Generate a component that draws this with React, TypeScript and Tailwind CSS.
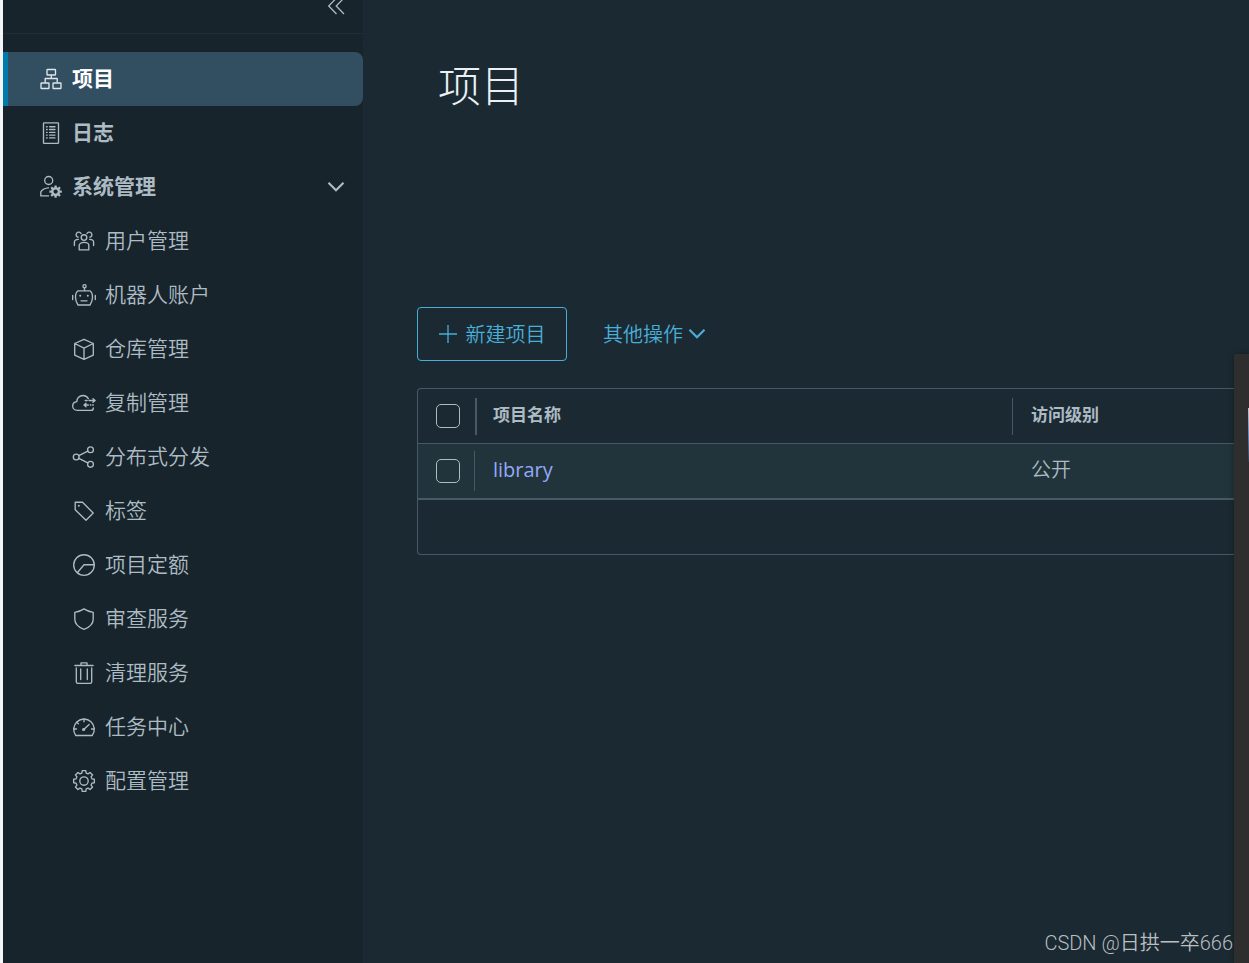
import type { ReactNode } from 'react';

function gearPath(cx: number, cy: number, outer: number, inner: number) {
  const points: string[] = [];
  for (let i = 0; i < 8; i++) {
    const a = (i * Math.PI) / 4;
    const steps: [number, number][] = [
      [-0.27, inner],
      [-0.17, outer],
      [0.17, outer],
      [0.27, inner],
    ];
    for (const [d, r] of steps) {
      points.push(`${(cx + r * Math.sin(a + d)).toFixed(2)} ${(cy - r * Math.cos(a + d)).toFixed(2)}`);
    }
  }
  return `M${points.join('L')}Z`;
}

function Icon({ children }: { children: ReactNode }) {
  return (
    <svg
      viewBox="0 0 24 24"
      className="size-6 shrink-0"
      fill="none"
      stroke="currentColor"
      strokeWidth="1.35"
      strokeLinejoin="round"
      strokeLinecap="round"
      aria-hidden="true"
    >
      {children}
    </svg>
  );
}

const icons = {
  projects: (
    <Icon>
      <rect x="8" y="2.5" width="8.500" height="5.500" rx="0.600" />
      <rect x="2" y="16" width="8" height="5.500" rx="0.600" />
      <rect x="14" y="16" width="8" height="5.500" rx="0.600" />
      <path d="M12.300 8.500v3M6.200 15v-3.500h12V15" />
    </Icon>
  ),
  logs: (
    <Icon>
      <rect x="4.500" y="1.900" width="15" height="20.500" rx="0.600" />
      <path d="M7.500 5.700h.7M7.500 8.500h.7M7.500 11.300h.7M7.500 14.100h.7M7.500 16.900h.7M10.600 5.700h5.400M10.600 8.500h5.400M10.600 11.300h5.400M10.600 14.100h5.400M10.600 16.900h5.400" />
    </Icon>
  ),
  admin: (
    <Icon>
      <circle cx="9.700" cy="5.500" r="4" />
      <path d="M9.500 20.900H1.800v-4c1.500-2.300 4.200-3.800 7.700-4" />
      <path d={gearPath(16.6, 16.6, 6.3, 4.5)} fill="currentColor" stroke="none" />
      <circle cx="16.600" cy="16.600" r="2.100" className="fill-[#17242b]" stroke="none" />
    </Icon>
  ),
  users: (
    <Icon>
      <circle cx="12" cy="8.500" r="2.800" />
      <path d="M7.200 20.900v-4.600c0-1.700 2.200-2.900 4.800-2.900s4.800 1.200 4.800 2.900v4.600z" />
      <path d="M6 8.200a2.600 2.600 0 1 1 3-3.700M18 8.200a2.600 2.600 0 1 0-3-3.700" />
      <path d="M2.400 16.500v-3.200c0-1.700 1.400-2.800 4-2.900M21.600 16.500v-3.200c0-1.700-1.400-2.800-4-2.900" />
    </Icon>
  ),
  robot: (
    <Icon>
      <circle cx="12.500" cy="3.200" r="1.600" />
      <path d="M12.500 4.800v3M6 7.800h12c1.500 1 2.500 3 2.500 6.500s-1 5.500-2.500 7.700H6c-1.500-2.200-2.500-4.200-2.500-7.700S4.500 8.800 6 7.800z" />
      <path d="M.7 12.500v4M23.300 12.500v4M9 17.800h6" />
      <circle cx="8.200" cy="12.700" r="1" fill="currentColor" stroke="none" />
      <circle cx="15.800" cy="12.700" r="1" fill="currentColor" stroke="none" />
    </Icon>
  ),
  registry: (
    <Icon>
      <path d="M12 2.300l9.300 4.200v11.700L12 22.300l-9.300-4.100V6.500zM2.700 6.500l9.300 4.700 9.300-4.700M12 11.200v11" />
    </Icon>
  ),
  replication: (
    <Icon>
      <path d="M16.400 7.700C15.200 5.500 13.300 4.500 11 4.500c-3.600 0-6.200 2.800-6.200 6.200C2.400 11 .7 12.700.7 15c0 2.500 1.900 4.400 4.400 4.400h14c1.300 0 2.200-1 2.200-2.500" />
      <path d="M13.200 9.500h2M17 9.500h6M21 7.700l2.100 1.800-2.100 1.800M20.700 14h.6M18.300 14h.6M16.300 14H12M14 12.200L12 14l2 1.800" />
    </Icon>
  ),
  distribution: (
    <Icon>
      <circle cx="4.200" cy="12" r="2.900" />
      <circle cx="18.500" cy="4.700" r="2.900" />
      <circle cx="18.500" cy="19.300" r="2.900" />
      <path d="M6.800 10.700l9-4.600M6.800 13.300l9 4.600" />
    </Icon>
  ),
  labels: (
    <Icon>
      <path d="M3.200 3.200h7.300L21.200 14 14 21.200 3.200 10.800z" />
      <circle cx="6.800" cy="6.800" r="1" fill="currentColor" stroke="none" />
    </Icon>
  ),
  quotas: (
    <Icon>
      <circle cx="12" cy="12" r="10.300" />
      <path d="M22.300 11.700H12l-6.700 8" />
    </Icon>
  ),
  interrogation: (
    <Icon>
      <path d="M12 1.900c2.800 1.900 6 3 9.200 3.400v6.900c0 4.600-4 8.100-9.200 10.200-5.200-2.100-9.200-5.600-9.200-10.200V5.300C6 4.900 9.200 3.800 12 1.900z" />
    </Icon>
  ),
  cleanup: (
    <Icon>
      <path d="M2.900 4.500h18.200M9 4.300V1.900h6v2.400M4.300 7v13.800c0 1 .6 1.500 1.500 1.500h12.400c.9 0 1.500-.5 1.500-1.500V7M8.700 8v10.500M15.300 8v10.500" />
    </Icon>
  ),
  jobs: (
    <Icon>
      <path d="M3.800 20.500A10.300 10.300 0 1 1 20.200 20.500z" />
      <path d="M12 4v2.800M4.700 7.200l1.700 1.600M1.900 14h2.600M19.500 14h2.600M11.800 14.400l5.300-5" />
      <circle cx="11.600" cy="14.500" r="1.600" fill="currentColor" stroke="none" />
    </Icon>
  ),
  config: (
    <Icon>
      <path d={gearPath(12, 12, 10.5, 8.2)} />
      <circle cx="12" cy="12" r="4.200" />
    </Icon>
  ),
};

const adminItems = [
  { label: '用户管理', icon: icons.users },
  { label: '机器人账户', icon: icons.robot },
  { label: '仓库管理', icon: icons.registry },
  { label: '复制管理', icon: icons.replication },
  { label: '分布式分发', icon: icons.distribution },
  { label: '标签', icon: icons.labels },
  { label: '项目定额', icon: icons.quotas },
  { label: '审查服务', icon: icons.interrogation },
  { label: '清理服务', icon: icons.cleanup },
  { label: '任务中心', icon: icons.jobs },
  { label: '配置管理', icon: icons.config },
];

function Chevron() {
  return (
    <svg viewBox="0 0 18 12" className="h-3 w-[18px] shrink-0" fill="none" stroke="currentColor" strokeWidth="2.200" aria-hidden="true">
      <path d="M1.500 1.800L9 9.300l7.500-7.500" />
    </svg>
  );
}

function Sidebar() {
  return (
    <aside className="w-[360px] shrink-0 bg-[#17242b] text-[21px] leading-6 text-[#adbbc4]">
      <div className="flex h-[34px] items-start justify-end border-b border-[#1f2d35] pr-[18px]">
        <button type="button" aria-label="收起菜单" className="h-4">
          <svg viewBox="0 0 18 16" className="h-4 w-[18px]" fill="none" stroke="currentColor" strokeWidth="1.300">
            <path d="M9.500 -2L1.700 6l7.800 8M17 -2L9.200 6l7.800 8" />
          </svg>
        </button>
      </div>
      <nav className="pt-[18px]">
        <a
          href="#projects"
          aria-current="page"
          className="flex h-[54px] items-center gap-[9px] rounded-r-lg border-l-[5px] border-[#0079ad] bg-[#324f62] pl-[31px] font-bold text-white"
        >
          <span className="text-[#dfe6ea]">{icons.projects}</span>
          <span className="pb-0.5">项目</span>
        </a>
        <a href="#logs" className="flex h-[54px] items-center gap-[9px] pl-9 font-bold">
          {icons.logs}
          <span className="pb-0.5">日志</span>
        </a>
        <button type="button" aria-expanded="true" className="flex h-[54px] w-full items-center gap-[9px] pr-[18px] pl-9 font-bold">
          {icons.admin}
          <span className="flex-1 pb-0.5 text-left">系统管理</span>
          <Chevron />
        </button>
        <ul>
          {adminItems.map((item) => (
            <li key={item.label}>
              <a href="#admin" className="flex h-[54px] items-center gap-[9px] pl-[69px] font-[350]">
                {item.icon}
                <span className="pb-0.5">{item.label}</span>
              </a>
            </li>
          ))}
        </ul>
      </nav>
    </aside>
  );
}

function Checkbox({ label }: { label: string }) {
  return (
    <input
      type="checkbox"
      aria-label={label}
      className="block size-6 appearance-none rounded-[5px] border border-[#adbbc4] checked:bg-[#4aaed9]"
    />
  );
}

function ProjectTable() {
  return (
    <div className="mt-[27px] rounded-l border border-r-0 border-[#495865]">
      <table className="w-full table-fixed border-separate border-spacing-0 text-left text-[#adbbc4]">
        <thead>
          <tr className="h-[55px] text-[17px] leading-6">
            <th className="w-[59px] border-b border-[#495865] p-0">
              <div className="flex h-[37px] items-center border-r-2 border-[#495865] pl-[18px]">
                <Checkbox label="全选" />
              </div>
            </th>
            <th className="border-b border-[#495865] p-0 font-bold">
              <div className="flex h-[37px] items-center border-r border-[#495865] pb-0.5 pl-4">项目名称</div>
            </th>
            <th className="w-[221px] border-b border-[#495865] p-0 pb-0.5 pl-[18px] font-bold">访问级别</th>
          </tr>
        </thead>
        <tbody>
          <tr className="h-14 bg-[#22343b] text-xl leading-6">
            <td className="border-b-2 border-[#495865] p-0 pr-0.5">
              <div className="flex h-10 items-center border-r border-[#495865] pl-[18px]">
                <Checkbox label="选择 library" />
              </div>
            </td>
            <td className="border-b-2 border-[#495865] p-0 pb-0.5 pl-4">
              <a href="#library" className="text-[#93a9f7]">library</a>
            </td>
            <td className="border-b-2 border-[#495865] p-0 pb-0.5 pl-[18px] font-[350]">公开</td>
          </tr>
        </tbody>
      </table>
      <div className="h-[54px]" />
    </div>
  );
}

export default function App() {
  return (
    <div className="relative flex min-h-screen overflow-hidden border-l-[3px] border-[#f4f5f6] bg-[#1b2a32] font-['Open_Sans','Noto_Sans_CJK_SC',sans-serif]">
      <Sidebar />
      <main className="min-w-0 flex-1 pt-[59px] pr-[15px] pl-[54px]">
        <h1 className="pl-[21px] text-[43px] leading-[54px] font-light text-[#eaf0f4]">项目</h1>
        <div className="mt-[194px] flex items-center gap-[36px] text-xl leading-6 font-[350] text-[#4aaed9]">
          <button type="button" className="flex h-[54px] w-[150px] items-center justify-center gap-[9px] rounded border border-[#4aaed9]">
            <svg viewBox="0 0 18 18" className="size-[18px]" stroke="currentColor" strokeWidth="1.300" aria-hidden="true">
              <path d="M0 9h18M9 0v18" />
            </svg>
            <span className="pt-0.5">新建项目</span>
          </button>
          <button type="button" className="flex h-[54px] items-center gap-[5px]">
            <span className="pt-0.5">其他操作</span>
            <Chevron />
          </button>
        </div>
        <ProjectTable />
      </main>
      <div className="absolute top-[354px] right-0 bottom-0 flex w-[15px] justify-end bg-[#2e2e2e] pt-[54px] shadow-[0_0_6px_rgba(0,0,0,0.35)]">
        <div className="h-[54px] w-px bg-linear-to-b from-[#c4c4c4] via-[#5e86b8] to-[#2e3c4c]" />
      </div>
      <p className="absolute right-4 bottom-2 font-['Roboto','Noto_Sans_CJK_SC',sans-serif] text-xl leading-6 font-[350] text-[#b9bec1]">
        CSDN @日拱一卒666
      </p>
    </div>
  );
}
